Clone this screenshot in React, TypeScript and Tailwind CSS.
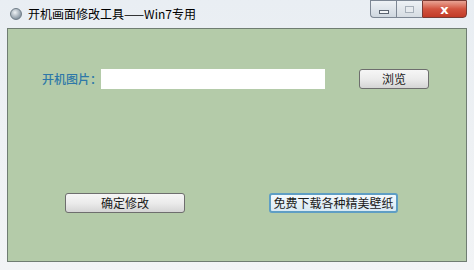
import React from "react";

const cjk = { fontFamily: '"Noto Sans CJK SC", "Noto Sans", sans-serif' };

function Btn({ children, w, focus }: { children: React.ReactNode; w: string; focus?: boolean }) {
  return (
    <div
      className={
        "h-[20px] flex items-center justify-center rounded-[3px] text-[12px] leading-none text-[#1a1a1a] whitespace-nowrap " +
        w +
        (focus
          ? " border-2 border-[#5f9ec4] bg-gradient-to-b from-[#f4f9fd] to-[#d8e9f4]"
          : " border border-[#6e6e6e] bg-gradient-to-b from-[#f6f6f6] via-[#ebebeb] to-[#d5d5d5]")
      }
    >
      {children}
    </div>
  );
}

export default function App() {
  return (
    <div
      className="w-[474px] h-[270px] overflow-hidden bg-gradient-to-b from-[#e9eef3] via-[#eef1f4] to-[#f2f4f6] flex flex-col"
      style={cjk}
    >
      {/* title bar */}
      <div className="h-[28px] flex justify-between items-start shrink-0">
        <div className="flex items-center h-[28px] pl-[10px] gap-[6px]">
          <div className="w-[12px] h-[12px] rounded-full bg-[radial-gradient(circle_at_40%_35%,#eef2f5,#8c9aa6_70%,#5d6b77)] border border-[#6f7c87]" />
          <span className="text-[12px] text-black leading-none whitespace-nowrap">开机画面修改工具——Win7专用</span>
        </div>
        <div className="flex mr-[7px] h-[18px]">
          <div className="w-[26px] h-[18px] border border-[#7d8794] border-r-0 rounded-bl-[4px] bg-gradient-to-b from-[#eef2f6] to-[#cfd7df] flex items-center justify-center">
            <div className="w-[10px] h-[4px] bg-[#f4f6f8] border border-[#5b6470] mt-[5px]" />
          </div>
          <div className="w-[26px] h-[18px] border border-[#7d8794] border-r-0 bg-gradient-to-b from-[#eef2f6] to-[#d6dce2] flex items-center justify-center">
            <div className="w-[9px] h-[7px] border border-[#a7b0ba] bg-[#e7ebef]" />
          </div>
          <div className="w-[45px] h-[18px] border border-[#7a3a33] rounded-br-[4px] bg-gradient-to-b from-[#e8a394] via-[#d2533f] to-[#c23a26] flex items-center justify-center">
            <span className="text-white text-[13px] font-bold leading-none" style={{ fontFamily: '"DejaVu Sans", sans-serif' }}>x</span>
          </div>
        </div>
      </div>

      {/* client area */}
      <div className="ml-[7px] w-[460px] h-[234px] border border-[#6f7d72] bg-[#b4cba9] pl-[34px] pt-[40px] shrink-0">
        <div className="flex items-center h-[20px]">
          <span className="w-[59px] shrink-0 whitespace-nowrap text-[12px] font-medium text-[#2e78a8] leading-none">开机图片：</span>
          <div className="w-[224px] h-[20px] shrink-0 bg-white" />
          <div className="ml-[34px] shrink-0">
            <Btn w="w-[70px]">浏览</Btn>
          </div>
        </div>
        <div className="flex items-center mt-[104px] pl-[23px]">
          <Btn w="w-[120px]">确定修改</Btn>
          <div className="ml-[84px]">
            <Btn w="w-[129px]" focus>
              免费下载各种精美壁纸
            </Btn>
          </div>
        </div>
      </div>
    </div>
  );
}
